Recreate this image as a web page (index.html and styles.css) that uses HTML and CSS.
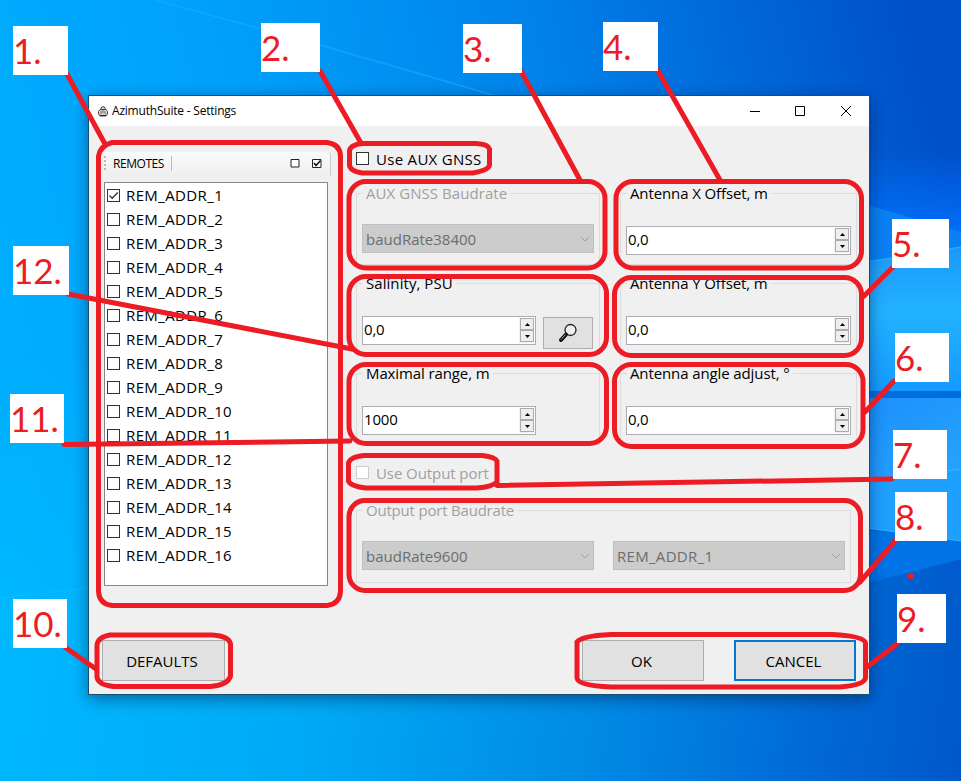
FILE: index.html
```
<!DOCTYPE html>
<html lang="en">
<head>
<meta charset="utf-8">
<title>AzimuthSuite - Settings</title>
<link rel="stylesheet" href="styles.css">
</head>
<body>
<div class="desktop">
  <svg class="wallpaper" viewBox="0 0 961 781" aria-hidden="true">
    <defs>
      <linearGradient id="sky" x1="0" y1="350" x2="940" y2="130" gradientUnits="userSpaceOnUse">
        <stop offset="0" stop-color="#00aeff"/><stop offset=".3" stop-color="#00a0fa"/><stop offset=".6" stop-color="#0084ea"/><stop offset=".8" stop-color="#006adb"/><stop offset="1" stop-color="#0050c8"/>
      </linearGradient>
      <linearGradient id="low" x1="0" y1="640" x2="961" y2="781" gradientUnits="userSpaceOnUse">
        <stop offset="0" stop-color="#00b8ff"/><stop offset=".33" stop-color="#00a9f5"/><stop offset=".62" stop-color="#008ae5"/><stop offset=".85" stop-color="#0068d5"/><stop offset="1" stop-color="#0058c8"/>
      </linearGradient>
      <linearGradient id="fade" x1="0" y1="350" x2="0" y2="620" gradientUnits="userSpaceOnUse">
        <stop offset="0" stop-color="#fff" stop-opacity="0"/><stop offset="1" stop-color="#fff"/>
      </linearGradient>
      <mask id="lowmask"><rect width="961" height="781" fill="url(#fade)"/></mask>
      <linearGradient id="wedge" x1="0" y1="150" x2="0" y2="240" gradientUnits="userSpaceOnUse">
        <stop offset="0" stop-color="#0070ff" stop-opacity="0"/><stop offset="1" stop-color="#0070ff"/>
      </linearGradient>
      <linearGradient id="beam" x1="0" y1="245" x2="0" y2="392" gradientUnits="userSpaceOnUse">
        <stop offset="0" stop-color="#1b98fa"/><stop offset=".45" stop-color="#22b2ff"/><stop offset="1" stop-color="#149aff"/>
      </linearGradient>
      <linearGradient id="pane" x1="860" y1="398" x2="961" y2="540" gradientUnits="userSpaceOnUse">
        <stop offset="0" stop-color="#1b90fb"/><stop offset="1" stop-color="#2aabff"/>
      </linearGradient>
    </defs>
    <rect width="961" height="781" fill="url(#sky)"/>
    <rect width="961" height="781" fill="url(#low)" mask="url(#lowmask)"/>
    <path d="M155 0 320 45 500 97" fill="none" stroke="#20a9ff" stroke-width="1.5" opacity=".65"/>
    <path d="M860 140H961V254L860 264Z" fill="url(#wedge)"/>
    <path d="M860 203 961 232V250L860 263Z" fill="#0a80f4"/>
    <path d="M860 263 961 247V392H860Z" fill="url(#beam)"/>
    <path d="M860 263 961 247" stroke="#27b5ff"/>
    <path d="M860 391H961V398H860Z" fill="#006de0"/>
    <path d="M860 398H961V541L860 527Z" fill="url(#pane)"/>
    <path d="M860 482 961 469V541L860 527Z" fill="#1ea0ff"/>
    <path d="M860 527 961 541V559L860 585Z" fill="#0073e6"/>
    <path d="M860 527 961 541M860 482 961 469" stroke="#35b4ff"/>
    <path d="M0 598 88 588" stroke="#15c0ff" opacity=".6"/>
  </svg>

  <main class="window">
    <header class="titlebar">
      <svg class="app-icon" viewBox="0 0 10 11"><path d="M3 3.5V1.5L5 .5 7 1.5V3.5M2 3.5H8L9.5 5.5V8L8 10H2L.5 8V5.5Z" fill="#d8d4d2" stroke="#4c4648"/><path d="M3 5V8M5 4V7M7 5V8" stroke="#77696a"/><path d="M2 9.5H8" stroke="#222"/></svg>
      <h1 class="title">AzimuthSuite - Settings</h1>
      <svg class="win-controls" viewBox="0 0 104 12"><path d="M0 6.5H10M45.5 1.5H54.500V10.500H45.500Z M91 1 101 11M101 1 91 11" fill="none" stroke="#000"/></svg>
    </header>
    <div class="content">
      <section class="remotes">
        <div class="toolbar">
          <span class="grip"></span><span class="toolbar-label">REMOTES</span><span class="separator"></span>
          <svg class="tool" viewBox="0 0 10 10"><path d="M1 1.500H9V9H1Z" fill="#fff" stroke="#222"/></svg>
          <svg class="tool" viewBox="0 0 10 10"><path d="M.5 1.500H9V9.500H.5Z" fill="#fff" stroke="#222"/><path d="M2 5 4 7.500 8.500 2.500" fill="none" stroke="#111" stroke-width="1.500"/></svg>
        </div>
        <ul class="list">
          <li><span class="box"><svg viewBox="0 0 11 11"><path d="M1.500 5.500 4.200 8.300 9.700 2.500" fill="none" stroke="#333" stroke-width="1.300"/></svg></span><span>REM_ADDR_1</span></li>
          <li><span class="box"></span><span>REM_ADDR_2</span></li>
          <li><span class="box"></span><span>REM_ADDR_3</span></li>
          <li><span class="box"></span><span>REM_ADDR_4</span></li>
          <li><span class="box"></span><span>REM_ADDR_5</span></li>
          <li><span class="box"></span><span>REM_ADDR_6</span></li>
          <li><span class="box"></span><span>REM_ADDR_7</span></li>
          <li><span class="box"></span><span>REM_ADDR_8</span></li>
          <li><span class="box"></span><span>REM_ADDR_9</span></li>
          <li><span class="box"></span><span>REM_ADDR_10</span></li>
          <li><span class="box"></span><span>REM_ADDR_11</span></li>
          <li><span class="box"></span><span>REM_ADDR_12</span></li>
          <li><span class="box"></span><span>REM_ADDR_13</span></li>
          <li><span class="box"></span><span>REM_ADDR_14</span></li>
          <li><span class="box"></span><span>REM_ADDR_15</span></li>
          <li><span class="box"></span><span>REM_ADDR_16</span></li>
        </ul>
      </section>
      <section class="settings">
        <div class="check"><span class="box"></span><span class="loose">Use AUX GNSS</span></div>
        <div class="groups">
          <fieldset class="group disabled"><legend class="even">AUX GNSS Baudrate</legend>
            <div class="combo"><span>baudRate38400</span><svg class="chevron" viewBox="0 0 10 6"><path d="M1 1 5 5 9 1"/></svg></div></fieldset>
          <fieldset class="group"><legend>Antenna X Offset, m</legend>
            <div class="spin wide"><span>0,0</span><div class="arrows"><i><svg viewBox="0 0 5 3"><path d="M0 3 2.500 0 5 3Z"/></svg></i><i><svg viewBox="0 0 5 3"><path d="M0 0H5L2.500 3Z"/></svg></i></div></div></fieldset>
          <fieldset class="group"><legend class="even">Salinity, PSU</legend>
            <div class="row"><div class="spin"><span>0,0</span><div class="arrows"><i><svg viewBox="0 0 5 3"><path d="M0 3 2.500 0 5 3Z"/></svg></i><i><svg viewBox="0 0 5 3"><path d="M0 0H5L2.500 3Z"/></svg></i></div></div>
            <div class="search"><svg viewBox="0 0 20 20"><circle cx="12.500" cy="7" r="5.500" fill="#eee" stroke="#222" stroke-width="1.300"/><path d="M8 11.500 3 17" stroke="#111" stroke-width="4" stroke-linecap="round"/><path d="M7.500 11.500 3 16.500" stroke="#aaa" stroke-width="1"/></svg></div></div></fieldset>
          <fieldset class="group"><legend>Antenna Y Offset, m</legend>
            <div class="spin wide"><span>0,0</span><div class="arrows"><i><svg viewBox="0 0 5 3"><path d="M0 3 2.500 0 5 3Z"/></svg></i><i><svg viewBox="0 0 5 3"><path d="M0 0H5L2.500 3Z"/></svg></i></div></div></fieldset>
          <fieldset class="group"><legend>Maximal range, m</legend>
            <div class="spin"><span>1000</span><div class="arrows"><i><svg viewBox="0 0 5 3"><path d="M0 3 2.500 0 5 3Z"/></svg></i><i><svg viewBox="0 0 5 3"><path d="M0 0H5L2.500 3Z"/></svg></i></div></div></fieldset>
          <fieldset class="group"><legend>Antenna angle adjust, °</legend>
            <div class="spin wide"><span>0,0</span><div class="arrows"><i><svg viewBox="0 0 5 3"><path d="M0 3 2.500 0 5 3Z"/></svg></i><i><svg viewBox="0 0 5 3"><path d="M0 0H5L2.500 3Z"/></svg></i></div></div></fieldset>
        </div>
        <div class="check output-check disabled"><span class="box"></span><span class="tight">Use Output port</span></div>
        <fieldset class="group output disabled"><legend class="tighter">Output port Baudrate</legend>
          <div class="row"><div class="combo"><span>baudRate9600</span><svg class="chevron" viewBox="0 0 10 6"><path d="M1 1 5 5 9 1"/></svg></div>
          <div class="combo"><span class="loose">REM_ADDR_1</span><svg class="chevron" viewBox="0 0 10 6"><path d="M1 1 5 5 9 1"/></svg></div></div></fieldset>
      </section>
    </div>
    <footer class="buttons">
      <div class="btn defaults">DEFAULTS</div><div class="btn">OK</div><div class="btn focus">CANCEL</div>
    </footer>
  </main>

  <svg class="marks" viewBox="0 0 961 781" aria-hidden="true">
    <path d="M112 142.500H327Q340 144 340.500 156V591Q340 604 327 605.500H112Q99 604 98.500 591V156Q100 146 112 142.500Z"/>
    <path d="M362 143.500H476Q488 144 489.500 149V165Q489 170 473 173H362Q350 171 349.500 165V151Q350 145 362 143.500Z"/>
    <rect x="349" y="181.500" width="256" height="86.500" rx="17"/>
    <rect x="616" y="181.500" width="245.500" height="86.500" rx="17"/>
    <rect x="349" y="276.500" width="257.500" height="78" rx="17"/>
    <rect x="614.500" y="277.500" width="247" height="78" rx="17"/>
    <rect x="349" y="364.500" width="257.500" height="79" rx="17"/>
    <rect x="614.500" y="364.500" width="248.500" height="82" rx="17"/>
    <path d="M364 455.500H482Q495 457 497 461V482Q492 487 477 488H366Q350 486 348.500 481V463Q350 457 364 455.500Z"/>
    <rect x="349" y="500.500" width="511.500" height="90" rx="16"/>
    <path d="M611 634.500H832Q864 636 865.500 643V678Q864 685 840 687H611Q578 686 577 678V642Q581 636 611 634.500Z"/>
    <path d="M110 635H212Q229 636 230.500 644V676Q228 685 210 686.500H114Q98 685 97 677V645Q98 637 110 635Z"/>
    <path d="M67 74 105 144M320 71 361 143M521 71 580 180M657 69 720 180M892 268 864 296M894 381 865 412M497 485.500 892 479M896 540 860 582M897 644 867 667M66 648 96 669M64 444.500 350 441M68 294 352 349"/>
    <path d="M910 576H911" stroke-width="6"/>
  </svg>
  <span class="tag n1">1.</span><span class="tag n2">2.</span><span class="tag n3">3.</span><span class="tag n4">4.</span>
  <span class="tag n5">5.</span><span class="tag n6">6.</span><span class="tag n7">7.</span><span class="tag n8">8.</span>
  <span class="tag n9">9.</span><span class="tag n10">10.</span><span class="tag n11">11.</span><span class="tag n12">12.</span>
</div>
</body>
</html>
```
FILE: styles.css
```
* { box-sizing: border-box; }
body { margin: 0; overflow: hidden; }
.desktop {
  position: relative; width: 961px; height: 781px; padding: 95px 0 0 88px; overflow: hidden;
  font-family: "Open Sans", "Noto Sans", sans-serif; font-size: 15px; line-height: 21px; color: #000;
}
svg { display: block; }
.wallpaper, .marks { position: absolute; left: 0; top: 0; width: 961px; height: 781px; }
.marks { fill: none; stroke: #ed1c24; stroke-width: 5; stroke-linecap: round; }

.window {
  position: relative; width: 782px; height: 600px; background: #f0f0f0;
  border: 1px solid #174f70; box-shadow: 0 4px 14px rgba(0, 20, 60, .48);
}
.titlebar { display: flex; align-items: center; height: 30px; padding-left: 9px; background: #fff; }
.app-icon { width: 10px; height: 11px; }
.title { margin: -1px 0 0 4px; font-size: 12px; font-weight: 400; letter-spacing: -.21px; white-space: nowrap; }
.win-controls { width: 104px; height: 12px; margin: -1px 15px 0 auto; }

.content { display: flex; height: 514px; padding-left: 15px; }
.remotes { width: 228px; padding-top: 26px; }
.toolbar {
  display: flex; align-items: center; width: 227px; height: 24px; margin-bottom: 6px; padding: 0 8px 2px 0;
  background: linear-gradient(#fafafa, #efefef); border-right: 1px solid #ccc; border-radius: 0 3px 0 0;
}
.grip { width: 2px; height: 15px; background: repeating-linear-gradient(#bbb 0 2px, transparent 2px 4px); }
.toolbar-label { margin-left: 7px; font-size: 12px; letter-spacing: -.45px; }
.separator { width: 1px; height: 15px; margin: 0 auto 0 7px; background: #bbb; }
.tool { width: 10px; height: 10px; margin-left: 12px; }
.list { width: 224px; height: 404px; margin: 0; padding: 0 0 0 2px; background: #fff; border: 1px solid #828790; list-style: none; letter-spacing: .38px; }
.list li { display: flex; align-items: center; height: 24px; gap: 6px; }
.box { flex: none; width: 13px; height: 13px; background: #fff; border: 1px solid #333; }

.loose { letter-spacing: .3px; }
.tight { letter-spacing: -.08px; }

.settings { width: 501px; margin-left: 24px; padding-top: 20px; }
.check { display: flex; align-items: center; gap: 7px; height: 25px; }
.check span:last-child { padding-top: 2px; }
.groups { display: grid; grid-template-columns: 244px 237px; column-gap: 20px; row-gap: 8px; margin-top: 12px; }
.group { min-width: 0; height: 82px; margin: 0; padding: 0 5px; border: 1px solid #dcdcdc; }
.group legend { height: 21px; margin-left: 1px; padding: 0 3px; white-space: nowrap; letter-spacing: -.11px; }
.group legend.even { letter-spacing: .06px; }
.group legend.tighter { letter-spacing: -.2px; }
.row { display: flex; align-items: flex-start; }
.disabled { color: #a0a0a0; }
.disabled .box { border-color: #ccc; }
.output-check { margin-top: 15px; }
.output { width: 495px; height: 83px; margin-top: 15px; }
.output .row { gap: 19px; }
.combo {
  display: flex; justify-content: space-between; align-items: center; width: 232px; height: 29px; margin-top: 20px;
  padding: 1px 3px 0; background: #ccc; border: 1px solid #bfbfbf; color: #6d6d6d;
}
.chevron { width: 10px; height: 6px; fill: none; stroke: #a0a0a0; }
.spin {
  display: flex; justify-content: space-between; width: 174px; height: 29px; margin-top: 22px; padding: 1px;
  line-height: 23px; background: #fff; border: 1px solid #abadb3; letter-spacing: -.2px;
}
.spin.wide { width: 225px; }
.arrows { width: 15px; padding-left: 1px; background: #f0f0f0; }
.arrows i { display: flex; align-items: center; justify-content: center; height: 12px; background: #eee; border: 1px solid #acacac; }
.arrows svg { width: 5px; height: 3px; }
.search { display: flex; align-items: center; justify-content: center; width: 50px; height: 32px; margin: 23px 0 0 7px; background: #e1e1e1; border: 1px solid #adadad; }
.search svg { width: 20px; height: 20px; }

.buttons { display: flex; height: 41px; padding-left: 13px; }
.btn { display: flex; align-items: center; justify-content: center; width: 122px; height: 41px; padding: 2px 3px 0 0; background: #e1e1e1; border: 1px solid #adadad; }
.btn.defaults { width: 123px; margin-right: 357px; }
.btn.focus { margin-left: 30px; border: 2px solid #0078d7; }

.tag {
  position: absolute; height: 49px; padding-left: 0; background: #fff; color: #ed1c24;
  font-family: Lato, sans-serif; font-size: 35px; line-height: 49px; white-space: nowrap;
}
.n1 { left: 13px; top: 26px; width: 55px; }
.n2 { left: 261px; top: 23px; width: 59px; }
.n3 { left: 463px; top: 24px; width: 59px; }
.n4 { left: 603px; top: 22px; width: 55px; }
.n5 { left: 892px; top: 219px; width: 57px; }
.n6 { left: 895px; top: 333px; width: 54px; }
.n7 { left: 893px; top: 430px; width: 54px; }
.n8 { left: 895px; top: 492px; width: 52px; }
.n9 { left: 897px; top: 594px; width: 49px; }
.n10 { left: 13px; top: 599px; width: 54px; }
.n11 { left: 10px; top: 394px; width: 54px; }
.n12 { left: 13px; top: 246px; width: 56px; }
```
